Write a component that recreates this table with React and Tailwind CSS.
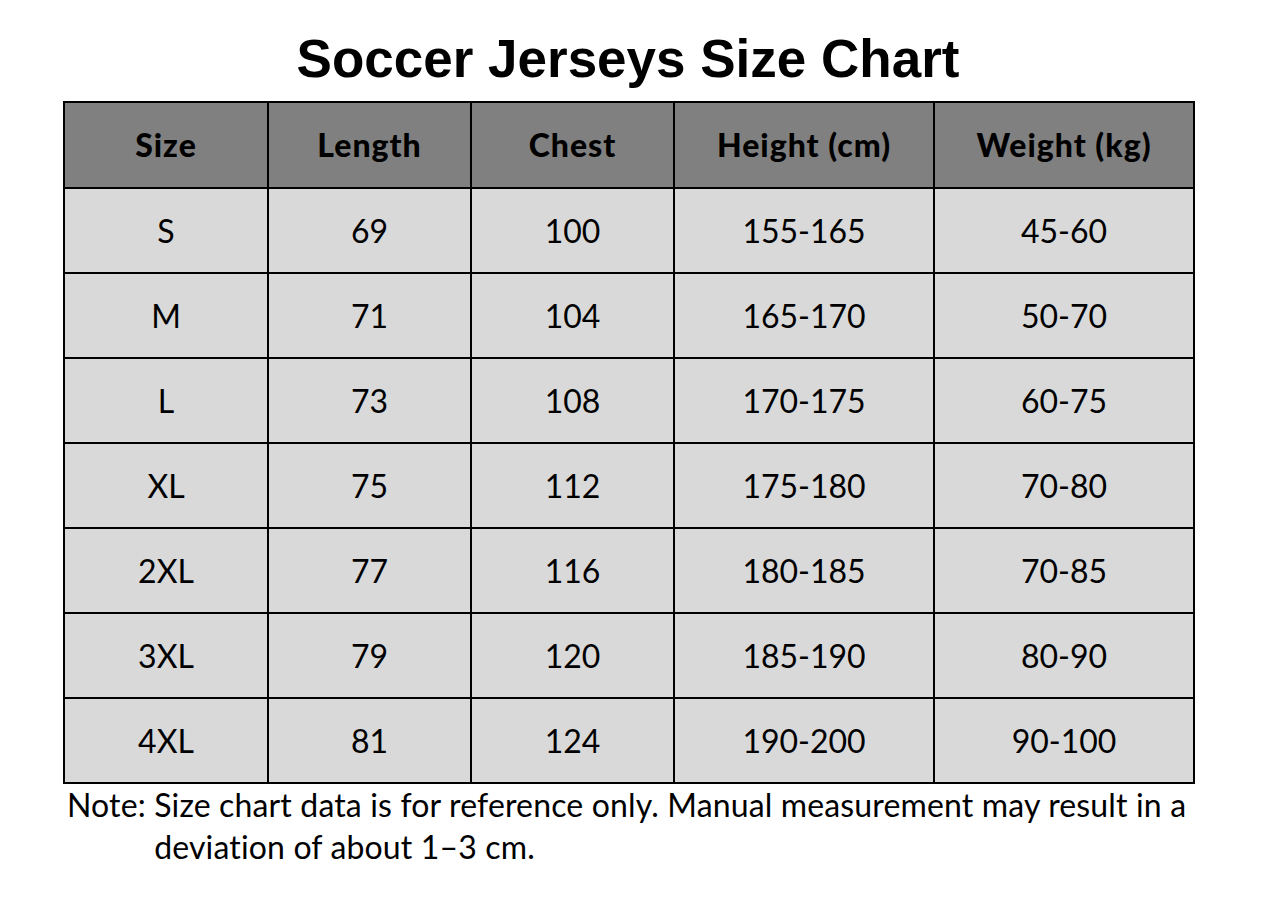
export default function App() {
  const rows = [
    ["S", "69", "100", "155-165", "45-60"],
    ["M", "71", "104", "165-170", "50-70"],
    ["L", "73", "108", "170-175", "60-75"],
    ["XL", "75", "112", "175-180", "70-80"],
    ["2XL", "77", "116", "180-185", "70-85"],
    ["3XL", "79", "120", "185-190", "80-90"],
    ["4XL", "81", "124", "190-200", "90-100"],
  ];
  const heads = ["Size", "Length", "Chest", "Height (cm)", "Weight (kg)"];
  const widths = ["w-[204px]", "w-[203px]", "w-[203px]", "w-[260px]", "w-[260px]"];
  return (
    <div className="w-[1265px] h-[910px] bg-white text-black">
      <div className="ml-[63px] w-[1130px]">
        <div className="h-[101px] flex items-start justify-center pt-[27px]">
          <h1 className="font-['Liberation_Sans',Arial,sans-serif] font-bold text-[53px] leading-[64px] whitespace-nowrap">
            Soccer Jerseys Size Chart
          </h1>
        </div>
        <table className="border-collapse border-2 border-black w-[1130px] table-fixed font-['Lato','Open_Sans',sans-serif]">
          <thead>
            <tr className="bg-[#808080] h-[86px]">
              {heads.map((h, i) => (
                <th key={h} className={`${widths[i]} border-2 border-black text-center font-black text-[32px] tracking-[1px] p-0`}>
                  {h}
                </th>
              ))}
            </tr>
          </thead>
          <tbody>
            {rows.map((r) => (
              <tr key={r[0]} className="bg-[#d9d9d9] h-[85px]">
                {r.map((c, i) => (
                  <td key={i} className="border-2 border-black text-center text-[32px] p-0">
                    {c}
                  </td>
                ))}
              </tr>
            ))}
          </tbody>
        </table>
      </div>
      <div className="ml-[67px] font-['Lato','Open_Sans',sans-serif] text-[32px] leading-[42px] tracking-[0.15px] flex">
        <span className="whitespace-nowrap">Note:&nbsp;</span>
        <span className="w-[1060px]">
          Size chart data is for reference only. Manual measurement may result in a deviation of about 1–3 cm.
        </span>
      </div>
    </div>
  );
}
